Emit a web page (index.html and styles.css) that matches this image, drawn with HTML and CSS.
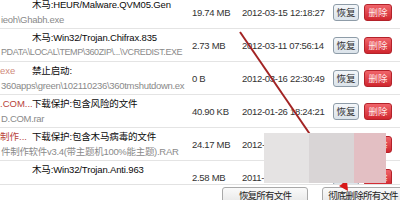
FILE: index.html
```html
<!DOCTYPE html>
<html lang="zh-CN">
<head>
<meta charset="utf-8">
<link rel="stylesheet" href="styles.css">
</head>
<body>
<div class="page">
  <div class="list">
    <div class="rows">
      <div class="row">
        <div class="name">
          <div class="line1"><span class="label"></span><span class="title">木马:HEUR/Malware.QVM05.Gen</span></div>
          <div class="path">ieoh\Ghabh.exe</div>
        </div>
        <div class="size">19.74 MB</div>
        <div class="date">2012-03-15 12:18:27</div>
        <div class="actions"><button class="btn restore">恢复</button><button class="btn del">删除</button></div>
      </div>
      <div class="row">
        <div class="name">
          <div class="line1"><span class="label"></span><span class="title">木马:Win32/Trojan.Chifrax.835</span></div>
          <div class="path tight">PDATA\LOCAL\TEMP\360ZIP\...\VCREDIST.EXE</div>
        </div>
        <div class="size">2.73 MB</div>
        <div class="date">2012-03-11 07:56:14</div>
        <div class="actions"><button class="btn restore">恢复</button><button class="btn del">删除</button></div>
      </div>
      <div class="row">
        <div class="name">
          <div class="line1"><span class="label pale">exe</span><span class="title">禁止启动:</span></div>
          <div class="path">360apps\green\102110236\360tmshutdown.ex</div>
        </div>
        <div class="size">0 B</div>
        <div class="date">2012-03-16 22:30:49</div>
        <div class="actions"><button class="btn restore">恢复</button><button class="btn del">删除</button></div>
      </div>
      <div class="row">
        <div class="name">
          <div class="line1"><span class="label">.COM...</span><span class="title">下载保护:包含风险的文件</span></div>
          <div class="path">D.COM.rar</div>
        </div>
        <div class="size">40.90 KB</div>
        <div class="date">2012-01-26 18:24:21</div>
        <div class="actions"><button class="btn restore">恢复</button><button class="btn del">删除</button></div>
      </div>
      <div class="row">
        <div class="name">
          <div class="line1"><span class="label">制作...</span><span class="title">下载保护:包含木马病毒的文件</span></div>
          <div class="path">件制作软件v3.4(带主题机100%能主题).RAR</div>
        </div>
        <div class="size">24.17 MB</div>
        <div class="date">2012-02-08 10:12:33</div>
        <div class="actions"><button class="btn restore">恢复</button><button class="btn del">删除</button></div>
      </div>
      <div class="row">
        <div class="name">
          <div class="line1"><span class="label"></span><span class="title">木马:Win32/Trojan.Anti.963</span></div>
          <div class="path"></div>
        </div>
        <div class="size">2.58 MB</div>
        <div class="date">2011-12-20 09:41:05</div>
        <div class="actions"><button class="btn restore">恢复</button><button class="btn del">删除</button></div>
      </div>
    </div>
  </div>
  <div class="bottombar">
    <button class="bbtn restore-all">恢复所有文件</button>
    <button class="bbtn delete-all">彻底删除所有文件</button>
  </div>
  <svg class="annot" width="400" height="200" viewBox="0 0 400 200">
    <line x1="240" y1="32" x2="344" y2="184" stroke="#a32424" stroke-width="2"/>
    <polygon points="348,191 347,181 339,186" fill="#d81818"/>
  </svg>
  <div class="mosaic"></div>
</div>
</body>
</html>
```
FILE: styles.css
```css
html, body {
  margin: 0;
  padding: 0;
  background: #ffffff;
}
body {
  font-family: "Liberation Sans", "Noto Sans CJK SC", sans-serif;
  font-size: 9.5px;
  color: #222;
}
.page {
  position: relative;
  width: 400px;
  height: 200px;
  overflow: hidden;
}
.list {
  height: 184px;
  overflow: hidden;
}
.rows {
  margin-top: -4px;
}
.row {
  display: grid;
  grid-template-columns: 192px 50px 91px 67px;
  height: 32px;
  border-bottom: 1px solid #e4e4e4;
  align-items: center;
}
.name {
  align-self: start;
  padding-top: 3px;
  padding-right: 2px;
  overflow: hidden;
  white-space: nowrap;
}
.line1 {
  display: flex;
  height: 11px;
  line-height: 11px;
}
.label {
  width: 32px;
  flex: none;
  overflow: hidden;
  color: #b8433a;
}
.label.pale {
  color: #cf8a7c;
}
.title {
  color: #0a0a0a;
  letter-spacing: -0.15px;
}
.path {
  margin-top: 4px;
  padding-left: 1px;
  height: 11px;
  line-height: 11px;
  color: #8a8a8a;
  overflow: hidden;
  letter-spacing: -0.3px;
}
.path.tight {
  font-size: 9px;
  letter-spacing: -0.4px;
}
.size, .date {
  color: #333;
  white-space: nowrap;
  letter-spacing: -0.3px;
}
.actions {
  display: flex;
  gap: 5px;
  align-items: center;
}
.btn {
  font-family: inherit;
  font-size: 9.5px;
  height: 17px;
  padding: 0;
  line-height: 15px;
  border-radius: 3px;
  cursor: pointer;
}
.restore {
  width: 26px;
  color: #333;
  border: 1px solid #8e9ca8;
  background: linear-gradient(#f3f6f9, #dbe3ea);
}
.del {
  width: 28px;
  color: #ffe8e8;
  border: 1px solid #b3222a;
  background: linear-gradient(#f0646a, #d0262e);
}
.bottombar {
  height: 16px;
  border-top: 1px solid #e2e2e2;
  display: flex;
  gap: 14px;
  padding: 2px 0 0 222px;
  background: #ffffff;
}
.bbtn {
  font-family: inherit;
  font-size: 9.5px;
  height: 18px;
  padding: 0;
  line-height: 16px;
  color: #222;
  border: 1px solid #a9a9a9;
  border-radius: 3px;
  background: linear-gradient(#fafafa, #e6e6e6);
  flex: none;
  letter-spacing: -0.8px;
}
.restore-all {
  width: 86px;
}
.delete-all {
  width: 82px;
}
.annot {
  position: absolute;
  left: 0;
  top: 0;
  pointer-events: none;
}
.mosaic {
  position: absolute;
  left: 264px;
  top: 133px;
  width: 122px;
  height: 50px;
  background: linear-gradient(to right, #e5e3e3 0 45px, #d9d5d6 45px 90px, #e3bfc3 90px);
}
```
